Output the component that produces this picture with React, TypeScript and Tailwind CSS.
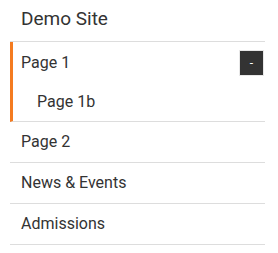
import React from "react";

export default function App() {
  const font = { fontFamily: "Roboto, 'Liberation Sans', sans-serif" };
  return (
    <div className="bg-white w-[278px] h-[253px] pl-[10px]" style={font}>
      <div className="w-[255px]">
        <div className="h-[42px] pl-[11px] pb-[3px] flex items-center text-[19px] text-[#333] border-b border-[#dddddd]">
          Demo Site
        </div>
        <div className="border-l-[3px] border-[#f47b20] border-b border-b-[#dddddd]">
          <div className="h-[40px] pl-[8px] pr-px pt-px flex items-center justify-between text-[16px] text-[#333]">
            <span>Page 1</span>
            <button className="w-[25px] h-[26px] bg-[#333333] border border-[#e8e8e8] text-white text-[12px] leading-none flex items-center justify-center">
              -
            </button>
          </div>
          <div className="h-[39px] pl-[24px] flex items-center text-[16px] text-[#333]">
            Page 1b
          </div>
        </div>
        {["Page 2", "News & Events", "Admissions"].map((t) => (
          <div
            key={t}
            className="h-[41px] pl-[11px] flex items-center text-[16px] text-[#333] border-b border-[#dddddd]"
          >
            {t}
          </div>
        ))}
      </div>
    </div>
  );
}
